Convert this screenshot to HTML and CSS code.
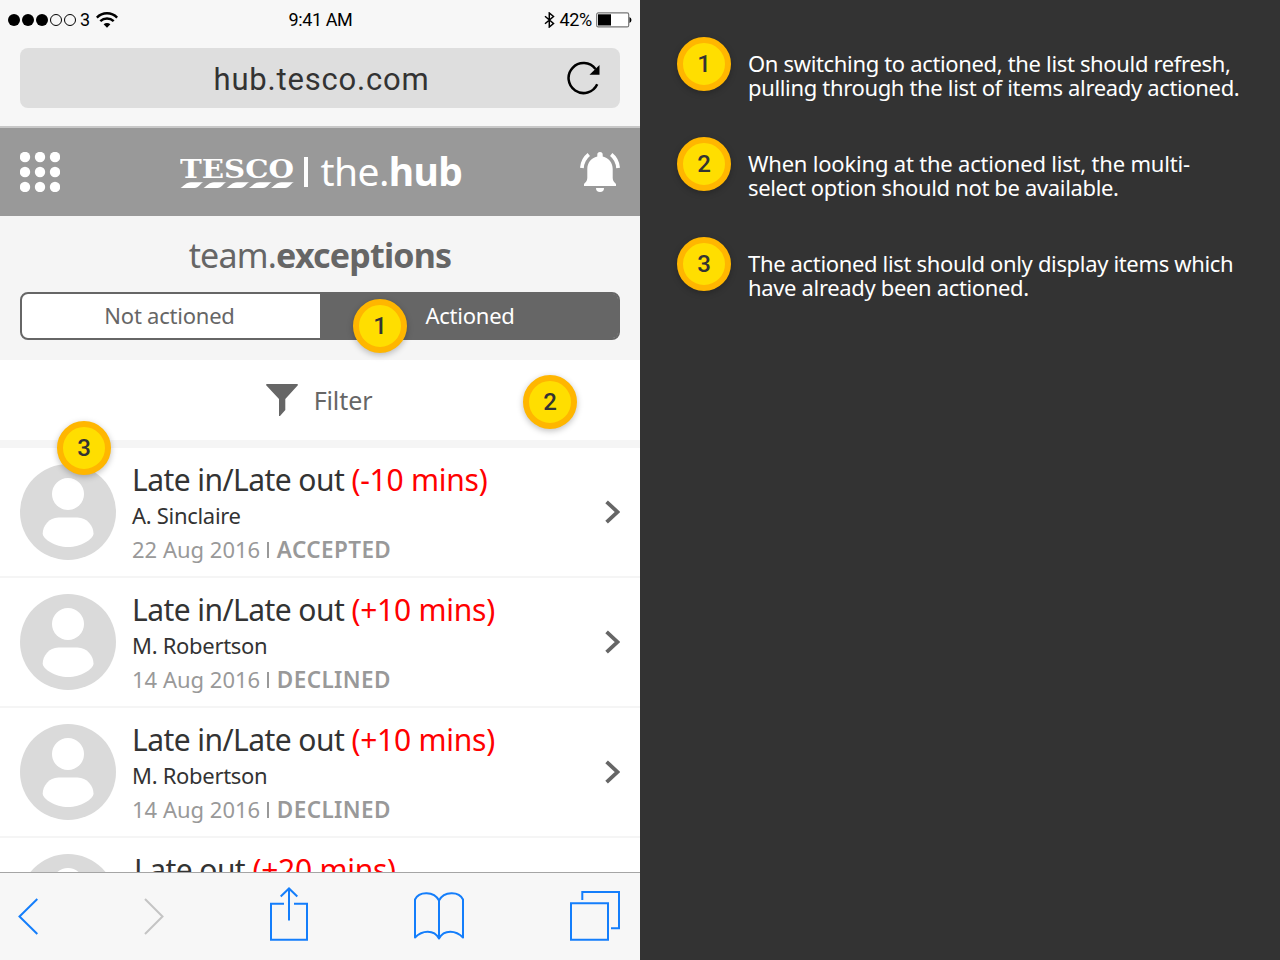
FILE: index.html
```html
<!DOCTYPE html>
<html lang="en">
<head>
<meta charset="utf-8">
<title>team.exceptions</title>
<link rel="stylesheet" href="styles.css">
</head>
<body>
<svg class="defs" width="0" height="0" aria-hidden="true">
  <symbol id="avatar" viewBox="0 0 96 96"><circle cx="48" cy="48" r="48" fill="#dadada"/><circle cx="48" cy="30" r="16" fill="#fff"/><path d="M38.500 53.500h19C67 53.500 73.500 62 73.500 69.500 73.500 75 61 83 48 83S22.700 75 22.700 69.500C22.700 62 29 53.500 38.500 53.500Z" fill="#fff"/></symbol>
  <symbol id="chevron" viewBox="0 0 16 24"><path d="M2.600 1.800 13.600 12 2.600 22.200" fill="none" stroke="#666" stroke-width="3.800"/></symbol>
</svg>
<div class="stage">
  <main class="phone">
    <div class="status">
      <div class="signal">
        <svg width="70" height="14" viewBox="0 0 70 14"><g fill="#000"><circle cx="6" cy="7" r="6"/><circle cx="20" cy="7" r="6"/><circle cx="34" cy="7" r="6"/></g><g fill="none" stroke="#000"><circle cx="48" cy="7" r="5.500"/><circle cx="62" cy="7" r="5.500"/></g></svg>
        <span class="carrier">3</span>
        <svg class="wifi" width="22" height="16" viewBox="0 0 22 16"><g fill="none" stroke="#000" stroke-width="2.500"><path d="M.8 5.600C6.500-.2 15.500-.2 21.200 5.600"/><path d="M4.300 9.200C8.200 5.500 13.800 5.500 17.700 9.200"/></g><path d="M7.600 12.300C9.600 10.600 12.400 10.600 14.400 12.300L11 15.700Z"/></svg>
      </div>
      <span class="clock">9:41 AM</span>
      <div class="power">
        <svg width="11" height="16" viewBox="0 0 11 16"><path d="M1 4.200 9.500 11.500 5.300 15V1L9.500 4.500 1 11.800" fill="none" stroke="#000" stroke-width="1.500"/></svg>
        <span class="percent">42%</span>
        <svg width="36" height="16" viewBox="0 0 36 16"><rect x=".7" y=".9" width="32" height="14" rx="1.500" fill="#fff" stroke="#777" stroke-width="1.200"/><rect x="2" y="2.300" width="13" height="11.200"/><path d="M33.500 5q2 1 2 3t-2 3Z"/></svg>
      </div>
    </div>
    <div class="browser">
      <div class="url"><span class="address">hub.tesco.com</span>
        <svg class="reload" width="34" height="34" viewBox="0 0 34 34"><path d="M30.200 23.300A15 15 0 1 1 28.500 8" fill="none" stroke="#000" stroke-width="2.500"/><path d="M32.500 4V13.800H22.500Z"/></svg>
      </div>
    </div>
    <header class="header">
      <svg width="40" height="40" viewBox="0 0 40 40" fill="#fff"><circle cx="5" cy="5" r="5.200"/><circle cx="20" cy="5" r="5.200"/><circle cx="35" cy="5" r="5.200"/><circle cx="5" cy="20" r="5.200"/><circle cx="20" cy="20" r="5.200"/><circle cx="35" cy="20" r="5.200"/><circle cx="5" cy="35" r="5.200"/><circle cx="20" cy="35" r="5.200"/><circle cx="35" cy="35" r="5.200"/></svg>
      <div class="brand">
        <svg width="114" height="36" viewBox="0 0 114 36" fill="#fff"><text class="tesco" x="0" y="23.800" textLength="114" lengthAdjust="spacingAndGlyphs">TESCO</text><path id="dash" d="M.5 34C4 32 6 28.200 11 28.200H23.500C19.500 29.500 19 34 14.500 34Z"/><use href="#dash" x="23"/><use href="#dash" x="46"/><use href="#dash" x="68.500"/><use href="#dash" x="90.500"/></svg>
        <span class="bar"></span>
        <span class="hub">the.<b>hub</b></span>
      </div>
      <svg width="40" height="40" viewBox="0 0 40 40"><g fill="#fff"><path d="M17.300 4.500V2.800a2.700 2.700 0 0 1 5.400 0V4.500C29 6 32.700 11 32.700 17V26C32.700 29 34.500 30.500 36 32V34H4V32C5.500 30.500 7.300 29 7.300 26V17C7.300 11 11 6 17.300 4.500Z"/><path d="M16 36H24A4 4 0 0 1 16 36Z"/></g><g fill="none" stroke="#fff" stroke-width="3.800"><path d="M8.800 2.500Q2.500 7.500 1.900 16"/><path d="M31.200 2.500Q37.500 7.500 38.100 16"/></g></svg>
    </header>
    <section class="heading">
      <h1 class="title">team.<b>exceptions</b></h1>
      <div class="tabs"><span class="tab">Not actioned</span><span class="tab active">Actioned</span></div>
    </section>
    <div class="filter"><svg width="32" height="32" viewBox="0 0 32 32"><path d="M1 0H31Q32.500 0 31.600 1.600L19.300 15V26L14 32H13V15L.4 1.600Q-.5 0 1 0Z" fill="#666"/></svg><span>Filter</span></div>
    <section class="list">
      <article class="row"><svg class="avatar"><use href="#avatar"/></svg><div class="info"><h2>Late in/Late out <em>(-10 mins)</em></h2><p class="name">A. Sinclaire</p><p class="meta">22 Aug 2016 <i></i><b>ACCEPTED</b></p></div><svg class="chevron"><use href="#chevron"/></svg></article>
      <article class="row"><svg class="avatar"><use href="#avatar"/></svg><div class="info"><h2>Late in/Late out <em>(+10 mins)</em></h2><p class="name">M. Robertson</p><p class="meta">14 Aug 2016 <i></i><b>DECLINED</b></p></div><svg class="chevron"><use href="#chevron"/></svg></article>
      <article class="row"><svg class="avatar"><use href="#avatar"/></svg><div class="info"><h2>Late in/Late out <em>(+10 mins)</em></h2><p class="name">M. Robertson</p><p class="meta">14 Aug 2016 <i></i><b>DECLINED</b></p></div><svg class="chevron"><use href="#chevron"/></svg></article>
      <article class="row last"><svg class="avatar"><use href="#avatar"/></svg><div class="info"><h2>Late out <em>(+20 mins)</em></h2></div></article>
    </section>
    <nav class="toolbar">
      <svg width="20" height="38" viewBox="0 0 20 38"><path d="M19.300 2 1.500 19.500 19.300 37" fill="none" stroke="#147efb" stroke-width="2"/></svg>
      <svg width="20" height="38" viewBox="0 0 20 38"><path d="M1 2 18.500 19.500 1 37" fill="none" stroke="#c4c4c4" stroke-width="2"/></svg>
      <svg class="share" width="38" height="54" viewBox="0 0 38 54"><path d="M14 16.700H1V52.700H37V16.700H24M19 33.500V1.500M10.700 9.500 19 1.500 27.300 9.500" fill="none" stroke="#147efb" stroke-width="2"/></svg>
      <svg width="50" height="48" viewBox="0 0 50 48"><path d="M25 8.500C20-1 5-1 1 7.500V45.500C8 38 20 37 25 46.500 30 37 42 38 49 45.500V7.500C45-1 30-1 25 8.500V46.500" fill="none" stroke="#147efb" stroke-width="2" stroke-linejoin="round"/></svg>
      <svg width="50" height="50" viewBox="0 0 50 50"><path d="M1 12.200H38V48.700H1ZM12.300 9V1H49V37.300H41" fill="none" stroke="#147efb" stroke-width="2"/></svg>
    </nav>
    <span class="badge pin pin-1">1</span>
    <span class="badge pin pin-2">2</span>
    <span class="badge pin pin-3">3</span>
  </main>
  <aside class="notes">
    <div class="note"><span class="badge">1</span><p>On switching to actioned, the list should refresh,<br>pulling through the list of items already actioned.</p></div>
    <div class="note"><span class="badge">2</span><p><span class="wide">When looking at the actioned list, the multi-</span><br>select option should not be available.</p></div>
    <div class="note"><span class="badge">3</span><p>The actioned list should only display items which<br>have already been actioned.</p></div>
  </aside>
</div>
</body>
</html>
```
FILE: styles.css
```css
* { box-sizing: border-box; margin: 0; }
body { font-family: "Noto Sans", sans-serif; color: #333; }
svg { display: block; flex: none; }
.defs { position: absolute; }
.stage { display: flex; width: 1280px; height: 960px; overflow: hidden; background: #333; }
.phone { position: relative; display: flex; flex-direction: column; width: 640px; height: 960px; background: #fff; overflow: hidden; }

.status { display: grid; grid-template-columns: 1fr auto 1fr; align-items: center; height: 40px; padding: 0 8px; background: #f7f7f7; color: #000; font: 18px/40px Roboto, sans-serif; }
.signal, .power { display: flex; align-items: center; }
.carrier { margin: 0 6px 0 2px; }
.clock { padding-left: 1px; letter-spacing: -0.4px; }
.power { justify-content: flex-end; gap: 4px; }
.percent { letter-spacing: -0.3px; }

.browser { height: 88px; padding: 8px 20px 0; background: #f7f7f7; border-bottom: 2px solid #c8c8c8; }
.url { display: grid; grid-template-columns: 1fr auto 1fr; align-items: center; height: 60px; padding-right: 19px; border-radius: 8px; background: #dedede; }
.address { grid-column: 2; height: 60px; padding: 2px 0 0 22px; font: 31px/60px Roboto, sans-serif; letter-spacing: 0.8px; }
.reload { justify-self: end; }

.header { display: flex; justify-content: space-between; align-items: center; height: 88px; padding: 0 20px; background: #999; color: #fff; }
.brand { display: flex; align-items: center; height: 40px; padding-left: 2px; }
.tesco { font: bold 26px "DejaVu Serif", serif; }
.bar { width: 4px; height: 30px; margin: 0 13px 0 10px; background: #fff; }
.hub { padding-bottom: 2px; font-size: 39px; line-height: 40px; letter-spacing: -0.6px; }

.heading { height: 144px; padding: 19px 20px 0; background: #f5f5f5; color: #666; }
.title { height: 57px; font-size: 34px; font-weight: 400; line-height: 40px; text-align: center; letter-spacing: -0.8px; }
.tabs { display: grid; grid-template-columns: 1fr 1fr; height: 48px; border: 2px solid #666; border-radius: 8px; background: #fff; }
.tab { font-size: 22px; line-height: 42px; text-align: center; letter-spacing: -0.23px; }
.tab:first-child { padding-right: 3px; }
.active { padding-left: 2px; background: #666; color: #fff; border-radius: 0 5px 5px 0; }

.filter { display: flex; justify-content: center; align-items: center; gap: 16px; height: 80px; padding-right: 2px; font-size: 25px; letter-spacing: -0.1px; color: #666; }

.list { flex: 1; min-height: 0; overflow: hidden; border-top: 8px solid #f5f5f5; }
.row { display: flex; align-items: center; height: 130px; padding: 0 20px; border-bottom: 2px solid #f5f5f5; }
.avatar { width: 96px; height: 96px; }
.info { flex: 1; height: 128px; padding: 12px 0 0 16px; white-space: nowrap; }
.last .info { padding-left: 18px; }
h2 { font-size: 30px; font-weight: 400; line-height: 40px; letter-spacing: -0.56px; }
em { color: #f00; font-style: normal; letter-spacing: -0.25px; }
.name { padding-bottom: 2px; font-size: 22px; line-height: 30px; letter-spacing: -0.3px; }
.meta { font-size: 22px; line-height: 34px; color: #999; }
.meta i { display: inline-block; width: 2px; height: 16px; margin: 0 8px 0 1px; background: #999; }
.meta b { font-size: 22.5px; font-weight: 600; letter-spacing: 0.4px; }
.chevron { width: 16px; height: 24px; }

.toolbar { display: flex; align-items: center; justify-content: space-between; height: 88px; padding: 0 20px 1px 18px; border-top: 1px solid #a5a5a5; background: #f7f7f7; }
.share { margin-bottom: 4px; }

.badge { display: block; flex: none; width: 54px; height: 54px; border: 6px solid #ffb600; border-radius: 50%; background: #ffde00; color: #333; box-shadow: 0 2px 6px rgba(0, 0, 0, 0.25); font: 500 24px/42px Roboto, sans-serif; text-align: center; }
.pin { position: absolute; }
.pin-1 { left: 353px; top: 299px; }
.pin-2 { left: 523px; top: 375px; }
.pin-3 { left: 57px; top: 421px; }

.notes { flex: 1; padding: 37px 0 0 37px; color: #fff; }
.note { display: flex; gap: 17px; height: 100px; }
.note p { padding-top: 14px; font-size: 22px; line-height: 24px; letter-spacing: -0.34px; white-space: nowrap; }
.note .wide { letter-spacing: -0.2px; }
```
